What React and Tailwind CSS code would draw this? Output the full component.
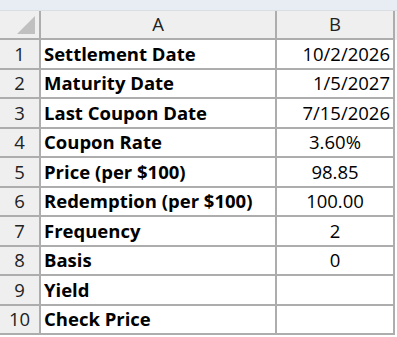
import React from 'react';

const rows = [
  { label: 'Settlement Date', value: '10/2/2026', align: 'right' },
  { label: 'Maturity Date', value: '1/5/2027', align: 'right' },
  { label: 'Last Coupon Date', value: '7/15/2026', align: 'right' },
  { label: 'Coupon Rate', value: '3.60%', align: 'center' },
  { label: 'Price (per $100)', value: '98.85', align: 'center' },
  { label: 'Redemption (per $100)', value: '100.00', align: 'center' },
  { label: 'Frequency', value: '2', align: 'center' },
  { label: 'Basis', value: '0', align: 'center' },
  { label: 'Yield', value: '', align: 'center' },
  { label: 'Check Price', value: '', align: 'center' },
];

const App = () => {
  return (
    <div className="w-[397px] h-[337px] bg-white overflow-hidden text-[18.5px] leading-none text-black" style={{ fontFamily: '"Open Sans", Lato, sans-serif' }}>
      {/* Ribbon edge */}
      <div className="h-[11px] bg-[#e7edf3] border-b border-[#d9dee4]" />

      {/* Column headers */}
      <div className="grid grid-cols-[41px_236px_118px] h-[29px] bg-[#efefef]">
        <div className="relative border-r-2 border-b-2 border-[#adadad]">
          <div className="absolute right-[4px] bottom-[4px] w-0 h-0 border-l-[18px] border-l-transparent border-b-[18px] border-b-[#c0c0c0]" />
        </div>
        <div className="flex items-center justify-center border-r-2 border-b-2 border-[#adadad] text-[#222]">A</div>
        <div className="flex items-center justify-center border-r-2 border-b-2 border-[#adadad] text-[#222]">B</div>
      </div>

      {/* Data rows */}
      {rows.map((row, i) => (
        <div key={i} className="grid grid-cols-[41px_236px_118px] h-[29.5px]">
          <div className="flex items-center justify-center bg-[#efefef] border-r-2 border-b-2 border-[#adadad] text-[#222]">
            {i + 1}
          </div>
          <div className="flex items-center pl-[3px] font-bold border-r-2 border-b-2 border-[#adadad] whitespace-nowrap">
            {row.label}
          </div>
          <div
            className={
              row.align === 'right'
                ? 'flex items-center justify-end pr-[3px] border-r-2 border-b-2 border-[#adadad]'
                : 'flex items-center justify-center border-r-2 border-b-2 border-[#adadad]'
            }
          >
            {row.value}
          </div>
        </div>
      ))}
    </div>
  );
};

export default App;
